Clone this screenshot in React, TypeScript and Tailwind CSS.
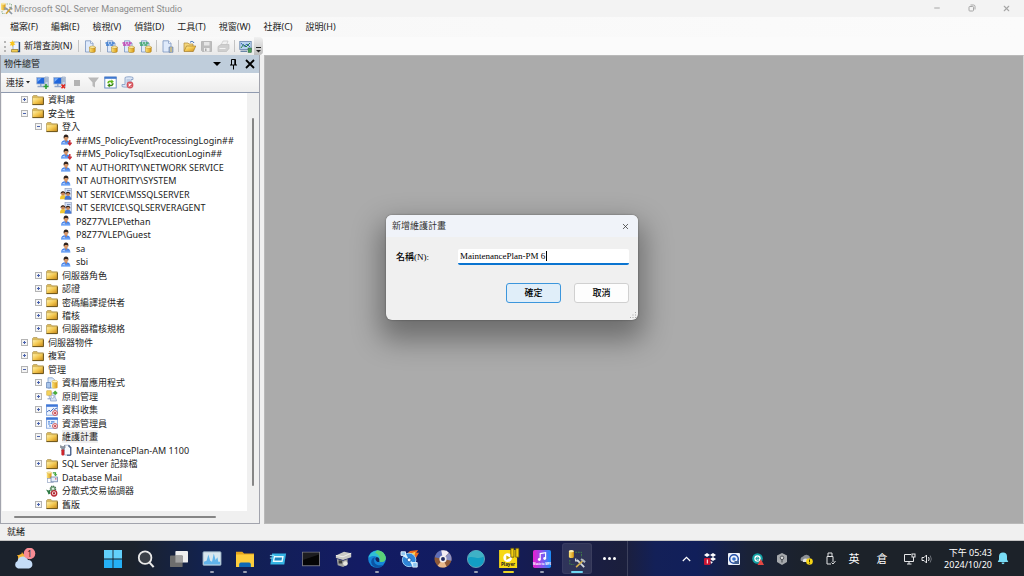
import React, { useState } from 'react';
import { X, Minus } from 'lucide-react';
import clsx from 'clsx';

type IconProps = { className?: string };

/* ---------- Tree icons ---------- */

// gradients shared by the small icons
const IconDefs = () => (
  <svg className="absolute size-0" aria-hidden="true">
    <defs>
      <linearGradient id="gold" x1="0" y1="0" x2="1" y2="1">
        <stop stopColor="#fff0a8" />
        <stop offset=".5" stopColor="#f3c74f" />
        <stop offset="1" stopColor="#c98a1c" />
      </linearGradient>
      <linearGradient id="blue" x1="0" y1="0" x2="0" y2="1">
        <stop stopColor="#2f6fe0" />
        <stop offset="1" stopColor="#7eb0fa" />
      </linearGradient>
      <linearGradient id="can" x1="0" y1="0" x2="1" y2="0">
        <stop stopColor="#fbe27a" />
        <stop offset="1" stopColor="#d8960f" />
      </linearGradient>
      <linearGradient id="music" x1="0" x2="1" y1="0" y2="0">
        <stop stopColor="#e91fd2" />
        <stop offset=".55" stopColor="#8059f1" />
        <stop offset="1" stopColor="#198df6" />
      </linearGradient>
    </defs>
  </svg>
);

const FolderIcon: React.FC<IconProps> = ({ className }) => (
  <svg viewBox="0 0 12 12" className={className} aria-hidden="true">
    <path d="M.5 10V2.500L1.500 1.500H5L6 2.800H11.300V10.500H.5Z" fill="#d9b95c" stroke="#a48c4e" strokeWidth=".6" />
    <path d="M.9 4.200H10.800V10.200H.9Z" fill="url(#gold)" />
    <path d="M.5 10.600H11.400V3.500" fill="none" stroke="#6b5218" strokeWidth="1" />
  </svg>
);

const UserIcon: React.FC<IconProps & { disabled?: boolean }> = ({ className, disabled }) => (
  <svg viewBox="0 0 12 12" className={className} aria-hidden="true">
    <path d="M1 10.700C.8 7.800 2.600 6.300 5.700 6.300S10.500 7.800 10.400 10.700Z" fill="url(#blue)" />
    <path d="M2.200 8.500 5 7.500 4.500 9.500Z" fill="#b9d5fd" />
    <path d="M4.800 5.500H7V7.300L6 8Z" fill="#c98455" />
    <circle cx="6" cy="4" r="2.200" fill="#d6976a" />
    <path d="M3.700 4.500C3.200 1.500 4.400.4 6.200.5 8.300.7 8.700 2.500 8.200 4.500L7.500 2.900 5 3Z" fill="#2e211b" />
    {disabled && <path d="M9.800 6V10M8 8.600 9.800 10.800 11.600 8.600" fill="none" stroke="#c92d35" strokeWidth="1.400" />}
  </svg>
);

const GroupIcon: React.FC<IconProps> = ({ className }) => (
  <svg viewBox="0 0 12 12" className={className} aria-hidden="true">
    <rect x="5" y=".5" width="6.500" height="11" fill="#d3e0f5" stroke="#8796b8" strokeWidth=".6" />
    <path d="M7 2.500H10.500" stroke="#7b93bf" />
    <path d="M0 11.300C0 8 1 7 3 7S5.800 8 6 11.300Z" fill="#f0c62f" />
    <path d="M4.500 11.600C4.500 8.500 6 7.500 7.700 7.500S11.200 8.500 11.400 11.600Z" fill="#4376d4" />
    <circle cx="3" cy="5.500" r="2" fill="#c98558" />
    <circle cx="8" cy="6" r="2" fill="#c98558" />
    <path d="M.6 6C.2 2.200 5.600 2.200 5.300 6L3.800 4.500 1.800 4.700Z" fill="#2c1f19" />
    <path d="M5.500 6.500C5.200 2.800 10.700 2.800 10.400 6.500L8.800 5 6.800 5.200Z" fill="#2c1f19" />
  </svg>
);

const DataTierIcon: React.FC<IconProps> = ({ className }) => (
  <svg viewBox="0 0 12 12" className={className} aria-hidden="true">
    <path d="M2 .8H6.500L8.500 2.800V11H2Z" fill="#dbe8f9" stroke="#6f93c4" strokeWidth=".7" />
    <path d="M.5 5.500H4.500V11H.5Z" fill="#a9c5ea" stroke="#4f74ab" strokeWidth=".6" />
    <path d="M6 4.500H11.500V10.500C11.500 11.800 6 11.800 6 10.500Z" fill="url(#can)" />
    <ellipse cx="8.750" cy="4.500" rx="2.750" ry="1.200" fill="#fff0ac" stroke="#c9951b" strokeWidth=".4" />
  </svg>
);

const PolicyIcon: React.FC<IconProps> = ({ className }) => (
  <svg viewBox="0 0 12 12" className={className} aria-hidden="true">
    <path d="M3 3H9V7C9 8.500 10.500 8.500 10.500 11H4.500C5.500 9.500 3 8 3 6Z" fill="#d6e2f6" stroke="#8399c2" strokeWidth=".7" />
    <rect x=".8" y=".8" width="4.400" height="4.400" fill="#f5d25a" stroke="#c49b24" strokeWidth=".5" />
    <path d="M6.800 3 9.200.5 11.700 3 9.500 5Z" fill="#4bad3d" />
    <circle cx="6.500" cy="6.800" r="1.500" fill="#fff" stroke="#7f94b8" strokeWidth=".6" />
    <path d="M1.500 8.800H5" stroke="#8399c2" />
  </svg>
);

const StoppedIcon: React.FC<IconProps & { kind: 'chart' | 'grid' }> = ({ className, kind }) => (
  <svg viewBox="0 0 12 12" className={className} aria-hidden="true">
    <rect x=".5" y=".8" width="11" height="10.400" fill="#eef4fd" stroke="#6a93d6" strokeWidth=".7" />
    <rect x=".2" y=".5" width="11.600" height="2.300" fill="#3d76d8" />
    {kind === 'chart' ? (
      <path d="M1 8.200 3 6.200 4.500 7.500 7.500 4.600 8.500 5.400 11 4" fill="none" stroke="#3d66b8" />
    ) : (
      <path d="M2 4.800H4M2 7H4M5 4.800H8.500M4.500 6.500H6.500M3 9H5" stroke="#4f86d9" strokeWidth="1.200" />
    )}
    <circle cx="9" cy="9" r="2.500" fill="#f9dcdc" stroke="#c9555b" strokeWidth=".9" />
    <rect x="8.200" y="8.200" width="1.700" height="1.700" fill="#c32a32" />
  </svg>
);

const PlanIcon: React.FC<IconProps> = ({ className }) => (
  <svg viewBox="0 0 12 12" className={className} aria-hidden="true">
    <path d="M4.500 1.200H9L10.800 3V11H4.500Z" fill="#f8fbff" stroke="#8fa4c4" strokeWidth=".7" />
    <path d="M9 1V3H10.800V11.200H7" fill="none" stroke="#24406f" strokeWidth="1" />
    <path d="M.6 1.300 2 2.600 3.500 2.600 4.800 1.300 5.300 3.200 3.900 4.800V7H1.800V4.800L.2 3.200Z" fill="#8f98a5" stroke="#59606b" strokeWidth=".4" />
    <rect x="1.400" y="5.600" width="2.900" height="5.800" rx=".8" fill="#cc242b" />
  </svg>
);

const MailIcon: React.FC<IconProps> = ({ className }) => (
  <svg viewBox="0 0 12 12" className={className} aria-hidden="true">
    <path d="M.8 1.500H5.500V7C5.500 8 .8 8 .8 7Z" fill="url(#can)" />
    <ellipse cx="3.150" cy="1.700" rx="2.350" ry="1" fill="#fff0ac" stroke="#c9951b" strokeWidth=".3" />
    <rect x="1.500" y="7.500" width="6" height="3.800" fill="#fff" stroke="#8497b9" strokeWidth=".6" />
    <rect x="5" y="6" width="6.500" height="4.800" fill="#e5edf9" stroke="#5c769f" strokeWidth=".7" />
    <path d="M9 7.200H10.500V8.500H9Z" fill="#d4626a" />
    <path d="M6.800 1.800H9.500V3.500" fill="none" stroke="#37a035" strokeWidth="1.200" />
    <path d="M7.600 3.200H11.400L9.500 5.300Z" fill="#37a035" />
  </svg>
);

const DtcIcon: React.FC<IconProps> = ({ className }) => (
  <svg viewBox="0 0 12 12" className={className} aria-hidden="true">
    <path d="M0 4.500 2.500 5.500 4 4.800 4.500 8.500 2.500 9.500 1.800 7.500Z" fill="#2f7a45" />
    <circle cx="7" cy="3.800" r="2.600" fill="#7fb288" stroke="#4d7355" strokeWidth="1.400" strokeDasharray="1.300 .7" />
    <circle cx="7" cy="3.800" r="1" fill="#eef6ef" />
    <circle cx="8" cy="8.300" r="2.700" fill="#f7e7e7" stroke="#b92833" strokeWidth="1.400" />
    <rect x="7" y="7.300" width="2" height="2" fill="#a92731" />
  </svg>
);

type NodeIcon = 'folder' | 'user' | 'userOff' | 'group' | 'tier' | 'policy' | 'collect' | 'governor' | 'plan' | 'mail' | 'dtc';

const TreeIcon: React.FC<{ kind: NodeIcon }> = ({ kind }) => {
  const size = 'size-3 shrink-0';
  switch (kind) {
    case 'user':
      return <UserIcon className={size} />;
    case 'userOff':
      return <UserIcon className={size} disabled />;
    case 'group':
      return <GroupIcon className={size} />;
    case 'tier':
      return <DataTierIcon className={size} />;
    case 'policy':
      return <PolicyIcon className={size} />;
    case 'collect':
      return <StoppedIcon className={size} kind="chart" />;
    case 'governor':
      return <StoppedIcon className={size} kind="grid" />;
    case 'plan':
      return <PlanIcon className={size} />;
    case 'mail':
      return <MailIcon className={size} />;
    case 'dtc':
      return <DtcIcon className={size} />;
    default:
      return <FolderIcon className={size} />;
  }
};

type TreeNode = { label: string; level: 0 | 1 | 2; icon: NodeIcon; state?: 'open' | 'closed'; selected?: boolean };

const nodes: TreeNode[] = [
  { label: '資料庫', level: 0, icon: 'folder', state: 'closed' },
  { label: '安全性', level: 0, icon: 'folder', state: 'open' },
  { label: '登入', level: 1, icon: 'folder', state: 'open' },
  { label: '##MS_PolicyEventProcessingLogin##', level: 2, icon: 'userOff' },
  { label: '##MS_PolicyTsqlExecutionLogin##', level: 2, icon: 'userOff' },
  { label: 'NT AUTHORITY\\NETWORK SERVICE', level: 2, icon: 'user' },
  { label: 'NT AUTHORITY\\SYSTEM', level: 2, icon: 'user' },
  { label: 'NT SERVICE\\MSSQLSERVER', level: 2, icon: 'group' },
  { label: 'NT SERVICE\\SQLSERVERAGENT', level: 2, icon: 'group' },
  { label: 'P8Z77VLEP\\ethan', level: 2, icon: 'user' },
  { label: 'P8Z77VLEP\\Guest', level: 2, icon: 'user' },
  { label: 'sa', level: 2, icon: 'user' },
  { label: 'sbi', level: 2, icon: 'user' },
  { label: '伺服器角色', level: 1, icon: 'folder', state: 'closed' },
  { label: '認證', level: 1, icon: 'folder', state: 'closed' },
  { label: '密碼編譯提供者', level: 1, icon: 'folder', state: 'closed' },
  { label: '稽核', level: 1, icon: 'folder', state: 'closed' },
  { label: '伺服器稽核規格', level: 1, icon: 'folder', state: 'closed' },
  { label: '伺服器物件', level: 0, icon: 'folder', state: 'closed' },
  { label: '複寫', level: 0, icon: 'folder', state: 'closed' },
  { label: '管理', level: 0, icon: 'folder', state: 'open' },
  { label: '資料層應用程式', level: 1, icon: 'tier', state: 'closed' },
  { label: '原則管理', level: 1, icon: 'policy', state: 'closed' },
  { label: '資料收集', level: 1, icon: 'collect', state: 'closed' },
  { label: '資源管理員', level: 1, icon: 'governor', state: 'closed' },
  { label: '維護計畫', level: 1, icon: 'folder', state: 'open', selected: true },
  { label: 'MaintenancePlan-AM 1100', level: 2, icon: 'plan' },
  { label: 'SQL Server 記錄檔', level: 1, icon: 'folder', state: 'closed' },
  { label: 'Database Mail', level: 1, icon: 'mail' },
  { label: '分散式交易協調器', level: 1, icon: 'dtc' },
  { label: '舊版', level: 1, icon: 'folder', state: 'closed' },
];

const indent = ['pl-[19px]', 'pl-[33px]', 'pl-[47px]'];

const TreeRow: React.FC<{ node: TreeNode }> = ({ node }) => (
  <li className={clsx('flex min-h-0 flex-1 items-center gap-1', indent[node.level])}>
    {node.state ? (
      <button className="size-[7px] shrink-0" aria-label={node.state === 'open' ? `摺疊 ${node.label}` : `展開 ${node.label}`}>
        <svg viewBox="0 0 7 7" className="block size-[7px]">
          <rect x=".5" y=".5" width="6" height="6" fill="#f4f4f4" stroke="#b4b4b4" />
          <path d={node.state === 'open' ? 'M2 3.500H5' : 'M2 3.500H5M3.500 2V5'} stroke="#4a63ae" />
        </svg>
      </button>
    ) : (
      <span className="w-[7px] shrink-0" />
    )}
    <TreeIcon kind={node.icon} />
    <span className={clsx('leading-[13px] whitespace-nowrap', node.selected && 'bg-[#f0f0f0]')}>{node.label}</span>
  </li>
);

/* ---------- Toolbar icons ---------- */

const NewQueryIcon = () => (
  <svg viewBox="0 0 13 13" className="size-[13px]" aria-hidden="true">
    <path d="M4 2H10V10H4Z" fill="#eef4fd" stroke="#8ba1c5" strokeWidth=".8" />
    <path d="M2.500 9.500H9V12H2.500Z" fill="#f1cd55" stroke="#8c6c1b" strokeWidth=".6" />
    <path d="M10.500 2V11.500H9" fill="none" stroke="#27456f" strokeWidth="1.300" />
    <path d="M3.300 0 4 2 6 1.500 5 3.300 6.500 4.600 4.400 5 4 7 2.800 5.200.8 5.500 1.900 3.600.5 2 2.600 2Z" fill="#f8c51e" />
  </svg>
);

const DocDbIcon: React.FC<{ tag?: string }> = ({ tag }) => (
  <svg viewBox="0 0 13 13" className="size-[13px]" aria-hidden="true">
    <path d="M2.500 .8H7.500L10 3.300V12H2.500Z" fill="#dfeafb" stroke="#7a94bf" strokeWidth=".8" />
    <path d="M7.500 .8V3.300H10" fill="#fff" stroke="#7a94bf" strokeWidth=".7" />
    {tag && <path d="M.5 3H3M3.600 3H6.200M6.800 3H9.500M1 5H4.500M5.200 5H8.500" stroke={tag} strokeWidth="1.600" />}
    <path d="M6.500 7H12.300V11.500C12.300 12.900 6.500 12.900 6.500 11.500Z" fill="url(#can)" stroke="#8f6810" strokeWidth=".4" />
    <ellipse cx="9.400" cy="7.200" rx="2.900" ry="1.100" fill="#fff0ac" stroke="#a97b12" strokeWidth=".4" />
  </svg>
);

const DocIcon = () => (
  <svg viewBox="0 0 13 13" className="size-[13px]" aria-hidden="true">
    <path d="M2 .8H7.500L10 3.300V12H2Z" fill="#dfeafb" stroke="#7a94bf" strokeWidth=".8" />
    <path d="M7.500 .8V3.300H10" fill="#fff" stroke="#7a94bf" strokeWidth=".7" />
    <path d="M8 7H12V12.300H8Z" fill="#9fb2d0" stroke="#667d9f" strokeWidth=".6" />
    <path d="M10 7V12" stroke="#e6c24f" />
  </svg>
);

const OpenIcon = () => (
  <svg viewBox="0 0 13 13" className="size-[13px]" aria-hidden="true">
    <path d="M1 11V3H5L6 4H10V6" fill="#f4d67c" stroke="#b08a3a" strokeWidth=".7" />
    <path d="M1 11.500 3.500 6H12.800L10.300 11.500Z" fill="url(#gold)" stroke="#9b6f17" strokeWidth=".6" />
    <path d="M7 2.300C8.500.9 10.200 1.200 11 3" fill="none" stroke="#3e6fb8" />
  </svg>
);

const SaveIcon = () => (
  <svg viewBox="0 0 13 13" className="size-[13px]" aria-hidden="true">
    <path d="M1.500 1.500H11.500V11.500H2.500L1.500 10.500Z" fill="#bdbdbd" stroke="#b0b0b0" strokeWidth=".8" />
    <path d="M4 2H9.500V5.500H4Z" fill="#e6e6e6" />
    <path d="M4 8H9.500V11.500H4Z" fill="#ededed" />
    <path d="M5 8.500H6.500V11H5Z" fill="#aaa" />
  </svg>
);

const PrintIcon = () => (
  <svg viewBox="0 0 13 13" className="size-[13px]" aria-hidden="true">
    <path d="M4 5 6 1H11L9.500 5Z" fill="#f1f1f1" stroke="#c6c6c6" strokeWidth=".7" />
    <path d="M1 6.500 4 4.500H12V8.500L9.500 11.500H1Z" fill="#cfcfcf" stroke="#bebebe" strokeWidth=".7" />
    <path d="M2.500 8.500H8.500" stroke="#f2f2f2" />
  </svg>
);

const ActivityIcon = () => (
  <svg viewBox="0 0 13 13" className="size-[13px]" aria-hidden="true">
    <rect x=".8" y="1.500" width="11.400" height="8" fill="#b9d4f0" stroke="#6583ab" strokeWidth=".8" />
    <path d="M2 8 4.500 4.500 7 7 11 3" fill="none" stroke="#2f8b3c" />
    <path d="M2 3 5 6.500 8 4 11 7" fill="none" stroke="#3b69b3" />
    <path d="M1.500 11.300H8" stroke="#6984a6" strokeWidth="1.400" />
    <rect x="9" y="8" width="3.500" height="4.500" fill="#4a9b57" stroke="#2c5f43" strokeWidth=".5" />
  </svg>
);

const ServerIcon: React.FC<{ off?: boolean }> = ({ off }) => (
  <svg viewBox="0 0 13 13" className="size-[13px]" aria-hidden="true">
    <rect x=".8" y="1.500" width="7.700" height="6.500" fill="#1f66dd" stroke="#9fb2d0" strokeWidth=".8" />
    <path d="M1.500 2.200H5.500L1.500 6Z" fill="#78adf6" />
    <path d="M1.500 10.500H8M4.800 8V10.500" stroke="#8fa5c8" strokeWidth="1.500" />
    <path d="M9 1H12.300V10.500H9Z" fill="#c9d6e8" stroke="#8197ba" strokeWidth=".6" />
    <path d="M9.500 3H11.800M9.500 5H11.800" stroke="#6f86a6" strokeWidth=".7" />
    {off ? (
      <path d="M8.500 8.500 12 12.200M12 8.500 8.500 12.200" stroke="#e0261e" strokeWidth="1.600" />
    ) : (
      <path d="M7.500 10.500H12.500M10 8V13" stroke="#2ea036" strokeWidth="1.600" />
    )}
  </svg>
);

const FilterIcon = () => (
  <svg viewBox="0 0 13 13" className="size-[13px]" aria-hidden="true">
    <path d="M1 1.500H12L8 6.500V11.500L5.500 10V6.500Z" fill="#b9b9b9" />
  </svg>
);

const RefreshIcon = () => (
  <svg viewBox="0 0 13 13" className="size-[13px]" aria-hidden="true">
    <rect x=".8" y="1" width="11.400" height="11" fill="#fff" stroke="#5f86bf" strokeWidth=".9" />
    <rect x=".5" y=".8" width="12" height="2" fill="#3f78cf" />
    <path d="M3.300 7.200C3.300 5 5.300 4 7.300 4.800L7.500 3.500 9.900 5.800 7 7.700 7 6.400C5.700 6 5 6.200 4.800 7.500Z" fill="#5fb81a" />
    <path d="M9.700 7.300C9.500 9.900 7.500 10.700 5.900 10L5.600 11.400 3.200 9.200 6 7.500 6.100 8.700C7.300 9 8 8.500 8.200 7.200Z" fill="#358311" />
  </svg>
);

const ScriptErrorIcon = () => (
  <svg viewBox="0 0 13 13" className="size-[13px]" aria-hidden="true">
    <path d="M4 1.500C5 .5 11 .5 12 1.500V3.500H10V9.500C9 11.500 3 11.500 1 10.500V8.500H4Z" fill="#dbe6f6" stroke="#8099c0" strokeWidth=".8" />
    <path d="M5.500 4H9M5.500 6H9" stroke="#8fa6ca" strokeWidth=".8" />
    <circle cx="9" cy="9" r="3.400" fill="#d5525b" />
    <path d="M7.600 7.600 10.400 10.400M10.400 7.600 7.600 10.400" stroke="#fff" strokeWidth="1.100" />
  </svg>
);

const ToolButton: React.FC<{ label: string; children: React.ReactNode }> = ({ label, children }) => (
  <button aria-label={label} className="flex h-4 w-[17px] shrink-0 items-center justify-center">
    {children}
  </button>
);

const Divider = () => <span className="mx-[2px] h-3 w-px shrink-0 bg-[#c3c3c3]" />;

/* ---------- Window chrome ---------- */

const AppLogo: React.FC<IconProps> = ({ className }) => (
  <svg viewBox="0 0 13 13" className={className} aria-hidden="true">
    <path d="M1 1.500H5.500V7.500C5.500 8.600 1 8.600 1 7.500Z" fill="url(#can)" />
    <ellipse cx="3.250" cy="1.700" rx="2.250" ry="1" fill="#fbe9a4" />
    <path d="M6.500 2H11.500V6" fill="none" stroke="#82a982" strokeWidth=".8" strokeDasharray="1.500 1" />
    <path d="M2 9V11.500H5" fill="none" stroke="#82a982" strokeWidth=".8" strokeDasharray="1.500 1" />
    <path d="M6 6 12 12" stroke="#8b97a5" strokeWidth="1.700" />
    <path d="M11 6 6 11.800" stroke="#d0a338" strokeWidth="1.600" />
    <path d="M9.500 5 12.300 7.300" stroke="#8a94a0" strokeWidth="1.500" />
    <path d="M5 5V7H7" fill="none" stroke="#8b97a5" strokeWidth="1.300" />
  </svg>
);

const TitleBar = () => (
  <header className="flex h-[17px] shrink-0 items-center bg-[#f3f3f3] text-[#8c8c8c]">
    <AppLogo className="size-[13px]" />
    <h1 className="flex-1 pl-px font-['Roboto','Noto_Sans',sans-serif] whitespace-nowrap">Microsoft SQL Server Management Studio</h1>
    <div className="flex text-[#a6a6a6]">
      <button aria-label="最小化" className="flex w-[35px] justify-center">
        <Minus className="size-2" strokeWidth={3} />
      </button>
      <button aria-label="還原" className="flex w-[35px] justify-center">
        <svg viewBox="0 0 8 8" className="size-2" fill="none" stroke="currentColor">
          <rect x="1" y="2.500" width="4.500" height="4.500" rx=".8" />
          <path d="M2.500 1H5.500Q7 1 7 2.500V5.500" />
        </svg>
      </button>
      <button aria-label="關閉" className="flex w-[35px] justify-center">
        <X className="size-[9px]" strokeWidth={3} />
      </button>
    </div>
  </header>
);

const menus = ['檔案(F)', '編輯(E)', '檢視(V)', '偵錯(D)', '工具(T)', '視窗(W)', '社群(C)', '說明(H)'];

const MenuBar = () => (
  <nav className="flex h-5 shrink-0 items-center gap-[13px] bg-linear-to-r from-[#f7f7f7] to-[#fbfbfb] pl-[10px]">
    {menus.map((menu) => (
      <button key={menu} className="whitespace-nowrap">
        {menu}
      </button>
    ))}
  </nav>
);

const MainToolbar = () => (
  <div className="flex h-[18px] shrink-0 bg-[#fbfbfb]">
    <div className="flex w-[263px] items-center rounded-r-sm bg-linear-to-b from-[#fafafa] to-[#e9e9e9] pl-1">
      <span className="h-[11px] shrink-0 border-l-2 border-dotted border-[#b5b5b5]" />
      <button className="mr-1 ml-[3px] flex items-center gap-[2px] whitespace-nowrap">
        <NewQueryIcon />
        新增查詢(N)
      </button>
      <Divider />
      <ToolButton label="資料庫引擎查詢">
        <DocDbIcon />
      </ToolButton>
      <Divider />
      <ToolButton label="MDX 查詢">
        <DocDbIcon tag="#3478d0" />
      </ToolButton>
      <ToolButton label="DMX 查詢">
        <DocDbIcon tag="#c33eb0" />
      </ToolButton>
      <ToolButton label="XMLA 查詢">
        <DocDbIcon tag="#35a366" />
      </ToolButton>
      <Divider />
      <ToolButton label="SQL Server Compact 查詢">
        <DocIcon />
      </ToolButton>
      <Divider />
      <ToolButton label="開啟檔案">
        <OpenIcon />
      </ToolButton>
      <ToolButton label="儲存">
        <SaveIcon />
      </ToolButton>
      <ToolButton label="列印">
        <PrintIcon />
      </ToolButton>
      <Divider />
      <ToolButton label="活動監視器">
        <ActivityIcon />
      </ToolButton>
      <button
        aria-label="工具列選項"
        className="ml-auto flex h-full w-[9px] items-end justify-center rounded-r-sm bg-linear-to-b from-[#f1f1f1] to-[#bdbdbd] pb-[2px]"
      >
        <svg viewBox="0 0 5 6" className="h-[6px] w-[5px]">
          <path d="M0 .5H5" stroke="#222" />
          <path d="M0 3H5L2.500 5.500Z" fill="#222" />
        </svg>
      </button>
    </div>
  </div>
);

const ObjectExplorer = () => (
  <aside className="flex w-[260px] shrink-0 flex-col border-x border-b border-[#a2a4ad] bg-[#f0f0f0]">
    <div className="flex h-[18px] shrink-0 items-center bg-[#bfcddb] pl-[3px]">
      <h2 className="flex-1">物件總管</h2>
      <button aria-label="視窗位置" className="flex w-4 justify-center">
        <svg viewBox="0 0 8 4" className="h-1 w-2">
          <path d="M0 0H8L4 4Z" fill="#000" />
        </svg>
      </button>
      <button aria-label="自動隱藏" className="flex w-4 justify-center">
        <svg viewBox="0 0 9 12" className="h-3 w-[9px]" fill="none" stroke="#000">
          <path d="M2.500 7V1.500H6.500V7M1 7H8M4.500 7V11.500" />
          <path d="M5.800 1.500V7" />
        </svg>
      </button>
      <button aria-label="關閉面板" className="flex w-[18px] justify-center">
        <svg viewBox="0 0 10 10" className="size-[10px]" stroke="#000" strokeWidth="1.800">
          <path d="M1 1 9 9M9 1 1 9" />
        </svg>
      </button>
    </div>
    <div className="flex h-5 shrink-0 items-center border-b border-[#8f9aaf] bg-linear-to-b from-[#fbfbfb] to-[#ededed] pl-[5px]">
      <button className="mr-1 flex items-center gap-[2px] whitespace-nowrap">
        連接
        <svg viewBox="0 0 4 3" className="h-[3px] w-1">
          <path d="M0 0H4L2 2.500Z" fill="#222" />
        </svg>
      </button>
      <ToolButton label="連接物件總管">
        <ServerIcon />
      </ToolButton>
      <ToolButton label="中斷連接">
        <ServerIcon off />
      </ToolButton>
      <ToolButton label="停止">
        <span className="size-[6px] bg-[#b3b3b3]" />
      </ToolButton>
      <ToolButton label="篩選">
        <FilterIcon />
      </ToolButton>
      <ToolButton label="重新整理">
        <RefreshIcon />
      </ToolButton>
      <ToolButton label="指令碼錯誤">
        <ScriptErrorIcon />
      </ToolButton>
    </div>
    <div className="flex min-h-0 flex-1">
      <ul className="ml-px flex min-h-0 flex-1 flex-col bg-white">
        {nodes.map((node) => (
          <TreeRow key={node.label} node={node} />
        ))}
      </ul>
      <div className="flex w-3 shrink-0 justify-center pt-[25px] pb-[25px]">
        <span className="w-[2px] rounded-full bg-[#868686]" />
      </div>
    </div>
    <div className="flex h-3 shrink-0 items-center pr-[43px] pl-[13px]">
      <span className="h-[2px] flex-1 rounded-full bg-[#868686]" />
    </div>
  </aside>
);

const PlanDialog = () => {
  const [name, setName] = useState('MaintenancePlan-PM 6');

  return (
    <form
      role="dialog"
      aria-label="新增維護計畫"
      onSubmit={(e) => e.preventDefault()}
      className="absolute top-[215px] left-1/2 w-[252px] -translate-x-1/2 overflow-hidden rounded-md bg-[#f0f0f0] font-['Liberation_Serif','Noto_Sans_CJK_TC',serif] text-black shadow-[0_14px_28px_6px_rgba(0,0,0,0.36),0_0_2px_rgba(0,0,0,0.4)]"
    >
      <div className="flex h-[22px] items-center justify-between bg-[#f0f3f9] pr-2 pl-[6px] text-[#333]">
        <h2>新增維護計畫</h2>
        <button type="button" aria-label="關閉對話方塊">
          <X className="size-[9px]" strokeWidth={2} />
        </button>
      </div>
      <div className="px-[9px] pt-3 pb-[17px]">
        <div className="flex items-center">
          <label htmlFor="plan-name" className="w-[63px] pl-px font-medium">
            名稱(N):
          </label>
          <div className="relative flex-1">
            <input
              id="plan-name"
              value={name}
              onChange={(e) => setName(e.target.value)}
              className="block h-4 w-full rounded-xs border-b-2 border-[#0a74d0] bg-white px-[2px] leading-[12px] caret-transparent outline-none"
            />
            <span className="absolute top-[2px] left-[88px] h-[10px] w-px bg-black" />
          </div>
        </div>
        <div className="mt-[18px] flex justify-end gap-[13px] font-medium">
          <button type="submit" className="h-5 w-[55px] rounded-[3px] border border-[#3c96dc] bg-[#e0eef9]">
            確定
          </button>
          <button type="button" className="h-5 w-[55px] rounded-[3px] border border-[#d0d0d0] bg-[#fdfdfd]">
            取消
          </button>
        </div>
      </div>
      <svg viewBox="0 0 7 7" className="absolute right-px bottom-px size-[7px]" fill="#a9a9a9">
        <path d="M5 0H6V1H5ZM2.500 2.500H3.500V3.500H2.500ZM5 2.500H6V3.500H5ZM0 5H1V6H0ZM2.500 5H3.500V6H2.500ZM5 5H6V6H5Z" />
      </svg>
    </form>
  );
};

/* ---------- Taskbar ---------- */

const taskApps: { label: string; running?: boolean; icon: React.ReactNode }[] = [
  {
    label: '開始',
    icon: (
      <>
        <path d="M0 0H9.500V9.500H0ZM10.500 0H20V9.500H10.500Z" fill="#62d0fb" />
        <path d="M0 10.500H9.500V20H0ZM10.500 10.500H20V20H10.500Z" fill="#25b0f5" />
      </>
    ),
  },
  {
    label: '搜尋',
    icon: (
      <>
        <circle cx="9" cy="8.500" r="7" fill="#3b4048" stroke="#e9e9e9" strokeWidth="2" />
        <path d="M14 14 18.500 19" stroke="#e9e9e9" strokeWidth="2.400" />
      </>
    ),
  },
  {
    label: '工作檢視',
    icon: (
      <>
        <rect x="6" y="1" width="14" height="13" rx="1" fill="#efefef" />
        <rect x="0" y="6" width="14" height="13" rx="1" fill="#6d6d6d" />
        <path d="M6 6H14V14H6Z" fill="#a1a1a1" />
      </>
    ),
  },
  {
    label: '工作管理員',
    running: true,
    icon: (
      <>
        <rect x="0" y="2" width="20" height="15" rx="1" fill="#d8e6ee" stroke="#91a9bd" />
        <path d="M1 16V13L4 12 6 5 8 12 10 13 12 4 14 11 16 8 17 13H19V16Z" fill="#62b4ea" />
      </>
    ),
  },
  {
    label: '檔案總管',
    running: true,
    icon: (
      <>
        <path d="M0 2H7L9 4H20V19H0Z" fill="#e5a51c" />
        <path d="M0 5H20V18Q20 19 19 19H1Q0 19 0 18Z" fill="#fdcd3d" />
        <path d="M3.500 19V16Q3.500 14 5.500 14H14.500Q16.500 14 16.500 16V19Z" fill="#0d68b5" />
      </>
    ),
  },
  {
    label: '執行',
    icon: (
      <>
        <path d="M3.500 4H19L17 16H1.500Z" fill="#35b4e4" />
        <path d="M6 7.500H15.500L14.500 12.500H5Z" fill="#1b82bd" stroke="#e8fbff" strokeWidth="1.500" />
        <path d="M1 6H6M1 9H4" stroke="#9beafc" />
      </>
    ),
  },
  {
    label: '命令提示字元',
    icon: (
      <>
        <rect x=".5" y="2.500" width="19" height="15" fill="#050505" stroke="#7b7b83" />
        <path d="M1 3H19V5L1 11Z" fill="#1d1d20" />
      </>
    ),
  },
  {
    label: '伺服器工具',
    icon: (
      <>
        <path d="M1 6 10 2 18 3.500V8L9 11 1 9Z" fill="#c9c9c4" />
        <path d="M1 6 9 7.500 18 3.500" fill="none" stroke="#f2f2ee" />
        <path d="M2 10 9 12 14 10V16L9 19 3 17Z" fill="#a2a39f" />
        <path d="M4 11.500H8V15H4Z" fill="#3c3d3c" />
        <circle cx="11.500" cy="15" r="2.500" fill="#e7e7e0" />
      </>
    ),
  },
  {
    label: 'Microsoft Edge',
    running: true,
    icon: (
      <>
        <circle cx="10" cy="10" r="9.800" fill="#1585d8" />
        <path d="M.5 8.500C3-.8 17-2.500 19.700 8.500 19.800 12.500 16 14 12.500 12.800 13.500 7 6 4.500.5 8.500Z" fill="#2fbfd6" />
        <path d="M10 .3C16 .3 19.800 5 19.800 9.500 19.300 13.500 15.500 14 12.500 12.800 14.500 9 12.500 5 8 3Z" fill="#5bd277" />
        <path d="M8 8C5 12 7.500 17.500 14 17 16 17 17.500 16 18.300 15 15 21.500 5 21 3.500 14 3.500 10.500 5 8 8 8Z" fill="#0c55a6" />
        <path d="M8.500 8.500C11 6.800 13.500 9.500 12.500 12.600 13.500 13.500 11 14 9.500 12.500 8.300 11 8 9.500 8.500 8.500Z" fill="#14235f" />
      </>
    ),
  },
  {
    label: '光碟燒錄',
    icon: (
      <>
        <path d="M7 4 10 1 19 0 17 3 20 3 16 10Z" fill="#ee6b1e" />
        <path d="M11 4 16 2 15 6Z" fill="#ffd34a" />
        <circle cx="9" cy="11" r="7.500" fill="#2f86d8" stroke="#a5d7fa" />
        <path d="M9 11 2.500 7 5.500 4.500ZM9 11 15.500 15 12.500 17.500Z" fill="#d5f0ff" />
        <circle cx="9" cy="11" r="2.200" fill="#fff" stroke="#1b5aa5" />
        <path d="M0 2H5V6H0ZM13 14H18V19H13Z" fill="#8cc4ef" stroke="#e9f6ff" />
      </>
    ),
  },
  {
    label: '映像工具',
    icon: (
      <>
        <circle cx="10" cy="10" r="9.500" fill="#8f5a38" />
        <path d="M10 10 .7 8Q4-.5 10 .5Z" fill="#5e6db8" />
        <path d="M10 10 8 .6Q14-.5 16.500 3Z" fill="#f2ecf4" />
        <path d="M10 10 16.500 3Q20 6 19.500 12Z" fill="#8c90c4" />
        <path d="M10 10 14 18.500Q8 21 4 17.500Z" fill="#e9b98b" />
        <circle cx="10" cy="10" r="4" fill="#f4f0ef" />
        <circle cx="10" cy="10" r="2.200" fill="#202a62" />
      </>
    ),
  },
  {
    label: '水平儀',
    running: true,
    icon: (
      <>
        <circle cx="10" cy="10" r="9.500" fill="#129fc4" stroke="#6fa3b6" />
        <path d="M1 9C6 5 12 12 19 7 17-2 3-2 1 9Z" fill="#3fb1c6" />
      </>
    ),
  },
  {
    label: '播放器',
    running: true,
    icon: (
      <>
        <rect x="-1" y="0" width="20" height="20" fill="#f7d813" />
        <circle cx="8.500" cy="8.500" r="4.800" fill="#fff" />
        <path d="M7 6 11.500 8.500 7 11Z" fill="#d2b300" />
        <path d="M12-2H15.500V8H12ZM17.500-2H21V8H17.500Z" fill="#f2cf10" stroke="#544812" strokeWidth=".8" />
        <text x="9" y="18" textAnchor="middle" fontSize="5" fontWeight="bold" fill="#222">
          Player
        </text>
      </>
    ),
  },
  {
    label: '音樂',
    running: true,
    icon: (
      <>
        <rect x="0" y="0" width="20" height="20" rx="2" fill="url(#music)" />
        <path d="M8 10.500V4L14 3V9.500" fill="none" stroke="#fff" strokeWidth="1.300" />
        <circle cx="7" cy="10.500" r="1.600" fill="#fff" />
        <circle cx="13" cy="9.500" r="1.600" fill="#fff" />
        <text x="10" y="17" textAnchor="middle" fontSize="3" fontWeight="bold" fill="#fff">
          Music to MP3
        </text>
      </>
    ),
  },
];

const Taskbar = () => (
  <footer className="flex h-[35px] shrink-0 items-stretch bg-[linear-gradient(to_right,#1b222c_0%,#1b222c_13%,#12224f_20%,#131b63_35%,#111c60_47%,#171c4d_53%,#1b1f3c_61%,#132058_64%,#111f5a_68%,#1a2238_73%,#1c2229_80%)] text-white">
    <button aria-label="小工具" className="ml-[14px] flex w-6 shrink-0 items-center">
      <svg viewBox="0 0 22 22" className="size-[22px]">
        <path d="M8 4 10 7 5 10 3 7 7 7Z" fill="#f3a823" />
        <circle cx="8" cy="10" r="4" fill="#f6b534" />
        <path d="M4 20.500A4 4 0 0 1 3.500 13 5.500 5.500 0 0 1 14 12 4.300 4.300 0 0 1 15 20.500Z" fill="#c4dcf7" />
        <circle cx="15.500" cy="5.500" r="5.800" fill="#f78c94" />
        <text x="15.500" y="8.500" textAnchor="middle" fontSize="8" fill="#222">
          1
        </text>
      </svg>
    </button>
    <nav className="ml-[58px] flex shrink-0">
      {taskApps.map((app) => (
        <button key={app.label} aria-label={app.label} className="flex w-[33px] flex-col items-center pt-[9px]">
          <svg viewBox="0 0 20 20" className="size-[18px] overflow-visible">
            {app.icon}
          </svg>
          {app.running && (
            <span
              className={clsx('mt-[3px] h-[2px] rounded-full', app.label === '播放器' ? 'w-[11px] bg-[#e8d426]' : 'w-1 bg-[#9aa0b4]')}
            />
          )}
        </button>
      ))}
      <button
        aria-label="Microsoft SQL Server Management Studio"
        className="my-[2px] ml-1 flex w-[30px] flex-col items-center rounded-[3px] border border-white/5 bg-white/10 pt-[6px]"
      >
        <svg viewBox="0 0 20 20" className="size-[18px] overflow-visible">
          <path d="M1 1H6.500V8Q4 10 1 8Z" fill="url(#can)" />
          <ellipse cx="3.750" cy="1.300" rx="2.750" ry="1.200" fill="#fdeeb0" />
          <path d="M8 2.500H15V8M2 11V16H7" fill="none" stroke="#41834a" strokeDasharray="2 1" />
          <path d="M10 11 18 19" stroke="#d4d9e0" strokeWidth="2" />
          <path d="M17.500 11 9 19" stroke="#d3ae4d" strokeWidth="1.800" />
          <path d="M14.500 10 19 13.500" stroke="#aeb7c1" strokeWidth="2.200" />
          <path d="M8.500 9.500V12H11.500" fill="none" stroke="#d4d9e0" strokeWidth="1.500" />
        </svg>
        <span className="mt-[3px] h-[2px] w-3 rounded-full bg-[#6fd8f2]" />
      </button>
      <button aria-label="更多" className="flex w-9 items-center justify-center gap-[2px] border-r border-white/15">
        <span className="size-[3px] rounded-full bg-white" />
        <span className="size-[3px] rounded-full bg-white" />
        <span className="size-[3px] rounded-full bg-white" />
      </button>
    </nav>
    <div className="ml-auto flex shrink-0 items-center">
      <button aria-label="顯示隱藏的圖示" className="flex w-6 justify-center">
        <svg viewBox="0 0 9 6" className="h-[6px] w-[9px]" fill="none" stroke="#fff" strokeWidth="1.200">
          <path d="M.8 5 4.500 1.300 8.200 5" />
        </svg>
      </button>
      <button aria-label="通知" className="flex w-6 justify-center">
        <svg viewBox="0 0 12 12" className="size-3">
          <path d="M3 0 6 2 3 4 0 2ZM9 0 12 2 9 4 6 2ZM9 4 12 6 9 8 6 6ZM6 8 9 9 7 11Z" fill="#fff" />
          <rect x="0" y="5" width="6.500" height="7" rx="1" fill="#c91432" />
          <path d="M3.300 6.500V10.500" stroke="#fff" />
        </svg>
      </button>
      <button aria-label="安全性" className="flex w-6 justify-center">
        <svg viewBox="0 0 12 12" className="size-3">
          <rect width="12" height="12" rx="1" fill="#eef2fa" />
          <circle cx="6" cy="6" r="4.300" fill="none" stroke="#214da6" strokeWidth="1.500" />
          <circle cx="6" cy="6" r="1.800" fill="#3170cc" />
          <path d="M6.500 8H11V11H6.500Z" fill="#41608f" />
        </svg>
      </button>
      <button aria-label="防毒" className="flex w-6 justify-center">
        <svg viewBox="0 0 12 12" className="size-3">
          <circle cx="5.500" cy="5.500" r="5.300" fill="#13a2a4" />
          <circle cx="5.500" cy="5.500" r="3.200" fill="#fff" />
          <path d="M4 5.700H7C7 3.600 4 3.600 4 5.700 4 7.500 6 7.500 7 6.800" fill="none" stroke="#13a2a4" />
          <path d="M8.800 6 12 12H5.500Z" fill="#e44742" />
        </svg>
      </button>
      <button aria-label="加密" className="flex w-6 justify-center">
        <svg viewBox="0 0 12 12" className="size-3">
          <path d="M6 0 11 2.500V9L6 12 1 9V2.500Z" fill="#a5a8ac" />
          <circle cx="6" cy="4.800" r="1.800" fill="#d9dadb" stroke="#4d5258" />
          <path d="M6 6.500V9.500" stroke="#4d5258" strokeWidth="1.200" />
        </svg>
      </button>
      <button aria-label="雲端" className="flex w-6 justify-center">
        <svg viewBox="0 0 13 12" className="h-3 w-[13px]">
          <path d="M1 8A3 3 0 0 1 3 3.500 4 4 0 0 1 10 4L8 9Z" fill="#8b8f94" />
          <path d="M3 9A2.500 2.500 0 0 1 5 5.500L9 6V9Z" fill="#e0e1e3" />
          <circle cx="9.500" cy="8.500" r="3.300" fill="#f5d414" />
          <path d="M9.500 6.500V9M9.500 9.800V10.600" stroke="#3a3205" />
        </svg>
      </button>
      <button aria-label="安全移除硬體" className="flex w-6 justify-center">
        <svg viewBox="0 0 11 13" className="h-[13px] w-[11px]" fill="none" stroke="#e3e4e6">
          <path d="M3 4.500V1H7V4.500M2 4.500H8V10M2 4.500V12H6" />
          <path d="M6.500 10.500 8 12 10.500 9" />
        </svg>
      </button>
      <button className="w-6 text-[11px]">英</button>
      <button className="mx-1 w-6 text-[11px]">倉</button>
      <button aria-label="網路" className="flex w-[22px] justify-center">
        <svg viewBox="0 0 13 12" className="h-3 w-[13px]" fill="none" stroke="#e6e7e9">
          <path d="M8 1.500H1.500V8.500H10.500V6.500M4 11H8.500M6 8.500V11" />
          <rect x="9" y="1" width="3" height="3" />
          <path d="M10.500 4V7" />
        </svg>
      </button>
      <button aria-label="音量" className="flex w-[14px] justify-center">
        <svg viewBox="0 0 13 12" className="h-3 w-[13px]" fill="none" stroke="#e6e7e9">
          <path d="M1 4.500H3L5.500 2V10L3 7.500H1Z" />
          <path d="M7.500 4Q8.800 6 7.500 8" />
          <path d="M9.200 2.500Q11.500 6 9.200 9.500" stroke="#6c7178" />
        </svg>
      </button>
      <time dateTime="2024-10-20T17:43" className="ml-[10px] w-12 text-right text-[9px] leading-3 whitespace-nowrap">
        下午 05:43
        <br />
        2024/10/20
      </time>
      <button aria-label="通知中心" className="mr-[15px] ml-[5px] flex">
        <svg viewBox="0 0 12 13" className="h-[13px] w-3" fill="#78dcf5">
          <path d="M6 .5A4 4 0 0 1 10 4.500V7.500L11.300 10H.7L2 7.500V4.500A4 4 0 0 1 6 .5ZM4.500 10.500H7.500A1.500 1.700 0 0 1 4.500 10.500Z" />
        </svg>
      </button>
    </div>
  </footer>
);

const App: React.FC = () => (
  <div className="relative flex h-screen flex-col overflow-hidden bg-[#f0f0f0] font-['Noto_Sans','Noto_Sans_CJK_TC',sans-serif] text-[9px] leading-[12px] text-[#1c1c1c]">
    <IconDefs />
    <TitleBar />
    <MenuBar />
    <MainToolbar />
    <div className="flex min-h-0 flex-1 gap-1">
      <ObjectExplorer />
      <main className="flex-1 border border-[#b9b9b9] border-r-[#d5d5d5] bg-[#ababab]" />
    </div>
    <div className="flex h-[17px] shrink-0 items-center border-b border-[#c4c4c4] bg-[#f0f0f0] pl-[7px]" role="status">
      就緒
    </div>
    <Taskbar />
    <PlanDialog />
  </div>
);

export default App;
